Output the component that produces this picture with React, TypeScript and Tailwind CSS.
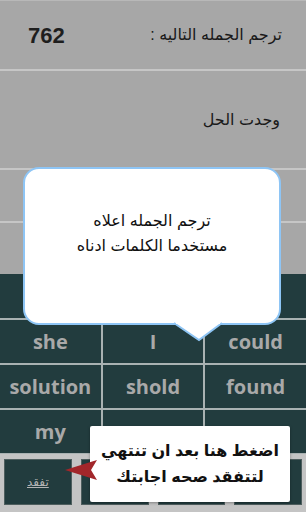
const words = ['she', 'I', 'could', 'solution', 'shold', 'found', 'my', '', ''];

export default function App() {
  return (
    <div
      className="relative w-[306px] h-[512px] overflow-hidden bg-[#c4c4c4] flex flex-col"
      style={{ fontFamily: '"Liberation Sans", "DejaVu Sans", sans-serif' }}
    >
      {/* gray header rows */}
      <div className="h-[69px] bg-[#a7a7a7] border-t border-[#b8b8b8] flex items-center justify-between pl-[28px] pr-[24px]">
        <span className="text-[22px] font-bold text-[#1e1e1e]">762</span>
        <span dir="rtl" className="text-[16px] text-[#1a1a1a]">ترجم الجمله التاليه :</span>
      </div>
      <div className="h-[2px] bg-[#c6c6c6]" />
      <div className="h-[97px] bg-[#a7a7a7] flex items-center justify-end pr-[26px]">
        <span dir="rtl" className="text-[16px] text-[#1a1a1a]">وجدت الحل</span>
      </div>
      <div className="h-[2px] bg-[#c6c6c6]" />
      <div className="h-[51px] bg-[#a7a7a7]" />
      <div className="h-[2px] bg-[#c6c6c6]" />
      <div className="h-[51px] bg-[#a7a7a7]" />

      {/* word grid */}
      <div className="grid grid-cols-3 gap-[2px] bg-[#a9b2b2] pb-[1px]">
        <div className="h-[44px] bg-[#223c3e]" />
        <div className="h-[44px] bg-[#223c3e]" />
        <div className="h-[44px] bg-[#223c3e]" />
        {words.map((w, i) => (
          <div
            key={i}
            className="h-[43px] bg-[#223c3e] flex items-center justify-center text-[20px] font-bold text-[#a9a9a9]"
            style={{ fontFamily: '"Open Sans", sans-serif' }}
          >
            {w}
          </div>
        ))}
      </div>

      {/* bottom buttons */}
      <div className="flex-1 flex gap-[9px] px-[4px] pt-[5px] pb-[7px]">
        <div className="flex-1 bg-[#223c3e] border border-[#4e5e5e] flex items-center justify-center">
          <span dir="rtl" className="text-[12px] text-[#b4b4b4] underline">تفقد</span>
        </div>
        <div className="flex-1 bg-[#223c3e] border border-[#4e5e5e]" />
        <div className="flex-1 bg-[#223c3e] border border-[#4e5e5e]" />
        <div className="flex-1 bg-[#223c3e] border border-[#4e5e5e]" />
      </div>

      {/* speech bubble */}
      <div className="absolute left-[23px] top-[167px] w-[258px] h-[158px] bg-white border-2 border-[#8ec5f5] rounded-[16px] flex flex-col items-center justify-center pb-[26px]">
        <div dir="rtl" className="text-[16px] leading-[25px] text-[#111] text-center">
          <div>ترجم الجمله اعلاه</div>
          <div>مستخدما الكلمات ادناه</div>
        </div>
      </div>
      <svg className="absolute left-[173px] top-[321px]" width="50" height="21" viewBox="0 0 50 21">
        <path d="M1 2 L26 19 L49 2 Z" fill="white" />
        <path d="M1 2 L26 19 L49 2" fill="none" stroke="#8ec5f5" strokeWidth="2" />
        <rect x="3" y="0" width="44" height="3" fill="white" />
      </svg>

      {/* hint callout */}
      <div className="absolute left-[90px] top-[426px] w-[200px] h-[76px] bg-white rounded-[2px] shadow-[0_1px_3px_rgba(0,0,0,0.35)] flex items-center justify-center">
        <div dir="rtl" className="text-[16px] leading-[26px] text-[#111] text-center font-bold">
          <div>اضغط هنا بعد ان تنتهي</div>
          <div>لتتفقد صحه اجابتك</div>
        </div>
      </div>
      <svg className="absolute left-[64px] top-[459px]" width="34" height="22" viewBox="0 0 34 22">
        <path d="M1 11 L33 1 L27 11 L33 21 Z" fill="#a2262a" />
      </svg>
    </div>
  );
}
